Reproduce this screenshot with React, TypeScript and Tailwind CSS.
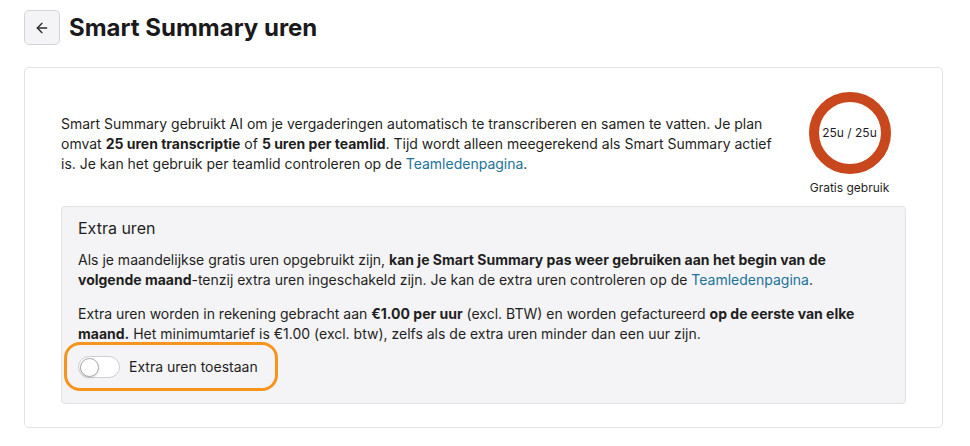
import { ArrowLeft } from "lucide-react";

function UsageRing({ used, total }: { used: number; total: number }) {
  const r = 36;
  const c = 2 * Math.PI * r;
  const pct = Math.min(used / total, 1);
  return (
    <div className="relative h-[82px] w-[82px]">
      <svg width="82" height="82" viewBox="0 0 82 82" className="-rotate-90">
        <circle cx="41" cy="41" r={r} fill="none" stroke="#f1d6cc" strokeWidth="10" />
        <circle
          cx="41"
          cy="41"
          r={r}
          fill="none"
          stroke="#c8471c"
          strokeWidth="10"
          strokeDasharray={c}
          strokeDashoffset={c * (1 - pct)}
        />
      </svg>
      <span className="absolute inset-0 flex items-center justify-center text-xs text-[#1d1d1f]">
        {used}u / {total}u
      </span>
    </div>
  );
}

export default function App() {
  return (
    <div className="min-h-screen bg-white pt-[10px] font-[family-name:Inter,sans-serif] text-[#1f1f22]">
      <div className="ml-6 flex items-center gap-[9px]">
        <button className="flex h-[35px] w-9 items-center justify-center rounded-[5px] border border-[#d4d4d8] bg-[#f4f4f6] text-[#2b2b2e]">
          <ArrowLeft size={16} strokeWidth={2} />
        </button>
        <h1 className="text-2xl font-bold text-[#1a1a1c]">Smart Summary uren</h1>
      </div>

      <section className="ml-6 mr-[27px] mt-[22px] rounded-[5px] border border-[#e2e2e4] bg-white px-9 pb-[23px] pt-6">
        <div className="flex items-center gap-4">
          <p className="flex-1 text-sm leading-5">
            Smart Summary gebruikt AI om je vergaderingen automatisch te transcriberen en samen te vatten. Je plan
            omvat <strong className="font-bold">25 uren transcriptie</strong> of{" "}
            <strong className="font-bold">5 uren per teamlid</strong>. Tijd wordt alleen meegerekend als Smart
            Summary actief is. Je kan het gebruik per teamlid controleren op de{" "}
            <a href="#" className="text-[#21729a]">Teamledenpagina</a>.
          </p>
          <div className="flex w-[113px] flex-col items-center">
            <UsageRing used={25} total={25} />
            <span className="mt-[6px] text-xs leading-4">Gratis gebruik</span>
          </div>
        </div>

        <div className="mt-[10px] rounded-[4px] border border-[#e2e2e4] bg-[#f4f4f6] px-4 pb-3 pt-[9px]">
          <h2 className="mb-[10px] text-base leading-6">Extra uren</h2>
          <p className="mb-[14px] text-sm leading-5">
            Als je maandelijkse gratis uren opgebruikt zijn,{" "}
            <strong className="font-bold">
              kan je Smart Summary pas weer gebruiken aan het begin van de volgende maand
            </strong>
            -tenzij extra uren ingeschakeld zijn. Je kan de extra uren controleren op de{" "}
            <a href="#" className="text-[#21729a]">Teamledenpagina</a>.
          </p>
          <p className="text-sm leading-5">
            Extra uren worden in rekening gebracht aan <strong className="font-bold">€1.00 per uur</strong> (excl.
            BTW) en worden gefactureerd <strong className="font-bold">op de eerste van elke maand.</strong> Het
            minimumtarief is €1.00 (excl. btw), zelfs als de extra uren minder dan een uur zijn.
          </p>
          <label className="-ml-[14px] -mt-[2px] flex w-fit items-center gap-[9px] rounded-2xl border-[3px] border-[#f7941d] pb-[10px] pl-[11px] pr-[17px] pt-[11px]">
            <span className="relative flex h-[22px] w-[42px] items-center rounded-full border border-[#cfcfd2] bg-white">
              <span className="absolute left-[1px] h-[19px] w-[19px] rounded-full border border-[#a9a9ad] bg-white shadow-sm" />
            </span>
            <span className="text-sm leading-5">Extra uren toestaan</span>
          </label>
        </div>
      </section>
    </div>
  );
}
